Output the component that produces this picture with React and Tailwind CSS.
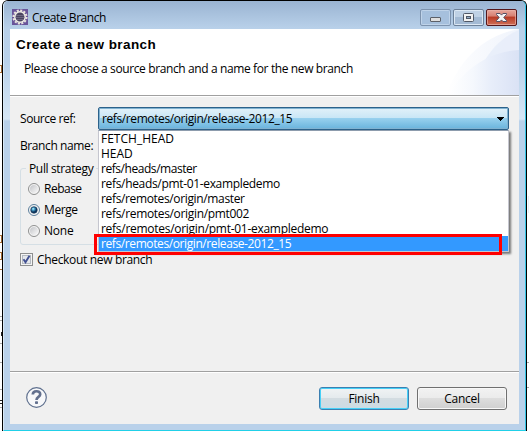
import React from 'react';

const refs = [
  ['FETCH_HEAD', ''],
  ['HEAD', ''],
  ['refs/heads/master', 'tracking-[-0.45px]'],
  ['refs/heads/pmt-01-exampledemo', 'tracking-[-0.33px]'],
  ['refs/remotes/origin/master', 'tracking-[-0.35px]'],
  ['refs/remotes/origin/pmt002', 'tracking-[-0.33px]'],
  ['refs/remotes/origin/pmt-01-exampledemo', 'tracking-[-0.28px]'],
  ['refs/remotes/origin/release-2012_15', 'tracking-[-0.4px]'],
];

function EclipseIcon() {
  return (
    <svg width="16" height="16" viewBox="0 0 16 16" className="block shrink-0">
      <rect width="16" height="16" fill="#69549a" />
      <circle cx="8" cy="8" r="6.6" fill="none" stroke="#e8e4dc" strokeWidth="2" strokeDasharray="2.1 1.35" />
      <circle cx="8" cy="8" r="5.2" fill="#4a4460" stroke="#f1eee8" strokeWidth="1.5" />
      <path d="M4 6.5h8M3.6 8.5h8.8M4.2 10.5h7.6" stroke="#77718c" strokeWidth="0.8" />
    </svg>
  );
}

function CaptionButtons() {
  return (
    <div className="mt-[8px] mr-[2px] flex gap-[2px]">
      <svg width="31" height="17" viewBox="0 0 31 17" className="block">
        <rect x=".5" y=".5" width="30" height="16" rx="1.5" fill="#a6c0dd" stroke="#7d93ae" />
        <rect x="1.5" y="1.5" width="28" height="14" rx="1" fill="none" stroke="#bfd3e9" />
        <rect x="10.5" y="8.5" width="10" height="4" rx=".5" fill="#dedede" stroke="#5c6068" />
      </svg>
      <svg width="31" height="17" viewBox="0 0 31 17" className="block">
        <rect x=".5" y=".5" width="30" height="16" rx="1.5" fill="#bfd1e5" stroke="#6d8199" />
        <rect x="1.5" y="8" width="28" height="7.5" fill="#a3bad4" />
        <rect x="1.5" y="1.5" width="28" height="14" rx="1" fill="none" stroke="#dce8f4" />
        <rect x="10.5" y="4.5" width="10" height="8" rx="1" fill="#f2f2f2" stroke="#505866" />
        <rect x="13.5" y="7.5" width="4" height="2" fill="#91aac5" stroke="#505866" />
      </svg>
      <svg width="31" height="17" viewBox="0 0 31 17" className="block">
        <defs>
          <linearGradient id="close" x2="0" y2="1">
            <stop stopColor="#e8a99f" /><stop offset=".43" stopColor="#d67e70" />
            <stop offset=".45" stopColor="#b83722" /><stop offset="1" stopColor="#d0735b" />
          </linearGradient>
        </defs>
        <rect x=".5" y=".5" width="30" height="16" rx="1.5" fill="url(#close)" stroke="#55171b" />
        <rect x="1.5" y="1.5" width="28" height="14" rx="1" fill="none" stroke="#e9b2a8" strokeOpacity=".7" />
        <path d="M10.5 4.5h3.6l1.4 1.6 1.4-1.6h3.6v1l-2.7 3 2.7 3v1h-3.6l-1.4-1.6-1.4 1.6h-3.6v-1l2.7-3-2.7-3z" fill="#f5f5f5" stroke="#565064" />
      </svg>
    </div>
  );
}

function Swoosh() {
  return (
    <svg width="73" height="66" viewBox="0 0 73 66" className="block">
      <defs>
        <linearGradient id="sw1"><stop stopColor="#fff" /><stop offset=".5" stopColor="#f7f9fd" /><stop offset="1" stopColor="#f0f4fc" /></linearGradient>
        <linearGradient id="sw2"><stop stopColor="#fff" /><stop offset=".35" stopColor="#f5f8fd" /><stop offset=".6" stopColor="#e8eefa" /><stop offset="1" stopColor="#dae2f5" /></linearGradient>
      </defs>
      <path d="M73 0V66H0C10 40 30 8 73 0Z" fill="url(#sw1)" />
      <path d="M36 36C46 18 58 7 73 1V30Z" fill="#e6ecf9" opacity=".8" />
      <path d="M73 21V66H2C16 44 38 23 73 21Z" fill="url(#sw2)" />
    </svg>
  );
}

function Radio({ label, checked, tracking }) {
  return (
    <div className="flex h-[21px] items-center gap-[4px]">
      <svg width="12" height="12" viewBox="0 0 12 12" className="block">
        <defs>
          <radialGradient id="dot" cx=".38" cy=".32"><stop stopColor="#c9f4ff" /><stop offset=".4" stopColor="#4aa9d2" /><stop offset="1" stopColor="#0b3159" /></radialGradient>
          <linearGradient id="ring" x2="1" y2="1"><stop stopColor="#c2c4c8" /><stop offset="1" stopColor="#fafafa" /></linearGradient>
        </defs>
        <circle cx="6" cy="6" r="5.5" fill="#f5f5f5" stroke={checked ? '#5c7f9b' : '#8e8f8f'} />
        <circle cx="6" cy="6" r="4" fill="url(#ring)" />
        {checked && <circle cx="6" cy="6" r="3.2" fill="url(#dot)" stroke="#153b5e" strokeWidth=".7" />}
      </svg>
      <span className={tracking}>{label}</span>
    </div>
  );
}

function Combo() {
  return (
    <div className="relative h-[23px] w-[411px]">
      <div className="flex h-[23px] items-center justify-between rounded-[2px] border border-[#2c628b] bg-[linear-gradient(#e2f1f9_0%,#c8e6f6_48%,#97d0ee_50%,#69b3dc_100%)] pr-[4px] pl-[3px] shadow-[inset_0_0_0_1px_#80b2d1]">
        <span className="tracking-[-0.4px]">refs/remotes/origin/release-2012_15</span>
        <svg width="7" height="4" viewBox="0 0 7 4" className="block" shapeRendering="crispEdges"><path d="M0 0h7v1H6v1H5v1H4v1H3V3H2V2H1V1H0z" /></svg>
      </div>
      <div className="absolute top-[23px] left-0 z-10 h-[122px] w-[411px] border border-[#c5c6cf] border-t-[#8d9cad] bg-white shadow-[2px_2px_2px_#777]">
        {refs.map(([name, tracking], i) => (
          <div key={name} className={`flex h-[15px] items-center pl-[2px] ${tracking} ${i === 7 ? 'bg-[#3399ff] text-white' : ''}`}>{name}</div>
        ))}
      </div>
      <div className="absolute top-[127px] left-[-4px] z-20 h-[21px] w-[408px] border-[3px] border-[#ff0000]" />
    </div>
  );
}

function DialogButton({ children, primary }) {
  return (
    <button className={`flex h-[23px] w-[90px] items-center justify-center rounded-[3px] border tracking-[-0.25px] ${primary ? 'border-[#3c7fb1] bg-[linear-gradient(#f0f3f4_0%,#e4eaed_48%,#d3dce1_50%,#ccdce4_100%)] shadow-[inset_0_0_0_1px_#46d0f7]' : 'border-[#707070] bg-[linear-gradient(#f2f2f2_0%,#ebebeb_48%,#dddddd_50%,#cfcfcf_100%)] shadow-[inset_0_0_0_1px_#f8f8f8]'}`}>
      {children}
    </button>
  );
}

function Backdrop() {
  return (
    <svg width="529" height="431" viewBox="0 0 529 431" className="absolute inset-0 block" shapeRendering="crispEdges">
      <path d="M0 65.5h2M1.5 65v8M0 72.5h2M0 235.5h2M1.5 235v8M0 242.5h2M0 252.5h2M1.5 252v8M0 259.5h2M0 269.5h2" stroke="#a66d36" />
      <path d="M0 316.5h2M0 320.5h2M0 343.5h2M0 362.5h2M0 389.5h2M0 407.5h2M527 362.5h2M527 387.5h2" stroke="#aaa" />
      <path d="M1 332h1v4H1zM0 400h2v1H0zM0 403h2v1H0z" fill="#222" />
      <path d="M528 196h1v17h-1z" fill="#e5f0fb" />
    </svg>
  );
}

export default function App() {
  return (
    <div className="relative h-[431px] w-[529px] overflow-hidden bg-white font-['Open_Sans','Noto_Sans',sans-serif] text-[12px] leading-[15px] whitespace-nowrap text-black">
      <Backdrop />
      <div className="relative ml-[2px] h-[431px] w-[525px] rounded-t-[6px] border-x border-t border-black bg-[#b9d1ea]">
        <div className="flex h-[430px] flex-col rounded-t-[5px] border-r border-b border-l border-r-[#35c5e5] border-b-[#21d0e8] border-l-[#d9eaf7] bg-[linear-gradient(#9ab4d2_0px,#b8d0e9_27px,#b9d1ea_60px,#d6e6f5_118px,#b9d1ea_120px)] px-[6px] pb-[6px]">
          <div className="flex h-[28px] shrink-0 justify-between">
            <div className="flex h-[32px] items-center gap-[4px] pl-[2px]">
              <EclipseIcon />
              <span className="tracking-[-0.45px]">Create Branch</span>
            </div>
            <CaptionButtons />
          </div>
          <div className="flex grow flex-col bg-[#f0f0f0]">
            <div className="flex h-[66px] justify-between bg-white">
              <div className="pt-[8px] pl-[6px]">
                <h1 className="font-['Liberation_Sans',Arial,sans-serif] text-[13.5px] leading-[16px] font-bold tracking-[0.43px]">Create a new branch</h1>
                <p className="mt-[8px] pl-[8px] tracking-[-0.38px]">Please choose a source branch and a name for the new branch</p>
              </div>
              <Swoosh />
            </div>
            <div className="h-[2px] border-t border-b border-t-[#a0a0a0] border-b-white" />
            <div className="flex grow flex-col pt-[10px] pr-[10px] pl-[10px]">
              <div className="flex h-[23px] items-center">
                <span className="w-[78px] tracking-[-0.45px]">Source ref:</span>
                <Combo />
              </div>
              <div className="mt-[8px] h-[15px] tracking-[-0.4px]">Branch name:</div>
              <fieldset className="mt-[8px] h-[84px] w-[489px] rounded-[3px] border border-[#d5dfe5] pl-[7px]">
                <legend className="ml-[-2px] h-[15px] px-[3px] tracking-[-0.35px]">Pull strategy</legend>
                <div className="mt-[2px]">
                  <Radio label="Rebase" tracking="tracking-[-0.5px]" />
                  <Radio label="Merge" tracking="tracking-[-0.4px]" checked />
                  <Radio label="None" tracking="tracking-[-0.2px]" />
                </div>
              </fieldset>
              <div className="mt-[7px] flex h-[15px] items-center gap-[4px]">
                <svg width="13" height="13" viewBox="0 0 13 13" className="block">
                  <rect x=".5" y=".5" width="12" height="12" fill="#f4f4f4" stroke="#8e8f8f" />
                  <rect x="2.5" y="2.5" width="8" height="8" fill="#e4e7eb" stroke="#b5bac1" />
                  <path d="M3.5 6.2L5.5 9.3 9.5 2.8" fill="none" stroke="#414f91" strokeWidth="1.9" />
                </svg>
                <span className="tracking-[-0.33px]">Checkout new branch</span>
              </div>
            </div>
            <div className="h-[2px] shrink-0 border-t border-b border-t-[#a0a0a0] border-b-white" />
            <div className="flex h-[51px] shrink-0 items-center justify-between pr-[12px] pl-[16px]">
              <svg width="21" height="21" viewBox="0 0 21 21" className="mb-[2px] block">
                <circle cx="10.5" cy="10.5" r="9.8" fill="#f7f8fa" stroke="#60718f" strokeWidth="1.2" />
                <path d="M6.8 7.6C6.8 3.2 14.2 3.2 14.2 7.2C14.2 10 10.5 9.7 10.5 13" fill="none" stroke="#63708e" strokeWidth="2.7" />
                <rect x="9" y="14.3" width="3" height="2.7" rx=".8" fill="#63708e" />
              </svg>
              <div className="flex gap-[8px]">
                <DialogButton primary>Finish</DialogButton>
                <DialogButton>Cancel</DialogButton>
              </div>
            </div>
          </div>
        </div>
      </div>
    </div>
  );
}
